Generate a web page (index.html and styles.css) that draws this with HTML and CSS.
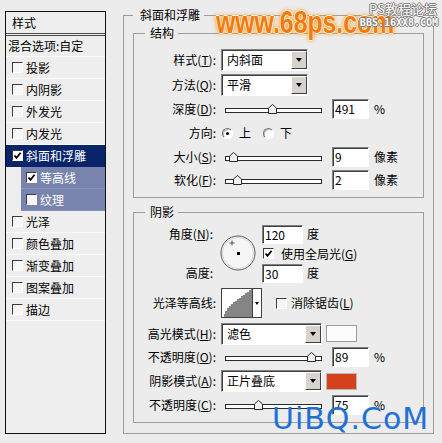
FILE: index.html
```html
<!DOCTYPE html>
<html lang="zh-CN">
<head>
<meta charset="UTF-8">
<title>图层样式 - 斜面和浮雕</title>
<link rel="stylesheet" href="styles.css">
</head>
<body>
  <div class="dialog">
    <div class="style-list">
      <div class="list-head">样式</div>
      <div class="list-row blend">混合选项:自定</div>
      <div class="list-row"><span class="cb"></span>投影</div>
      <div class="list-row"><span class="cb"></span>内阴影</div>
      <div class="list-row"><span class="cb"></span>外发光</div>
      <div class="list-row"><span class="cb"></span>内发光</div>
      <div class="list-row selected"><span class="cb on"><svg viewBox="0 0 9 9"><path d="M1.5 4.5 L3.5 6.8 L7.6 1.8"/></svg></span>斜面和浮雕</div>
      <div class="sub-rows">
        <div class="list-row sub"><span class="cb on"><svg viewBox="0 0 9 9"><path d="M1.5 4.5 L3.5 6.8 L7.6 1.8"/></svg></span>等高线</div>
        <div class="list-row sub"><span class="cb"></span>纹理</div>
      </div>
      <div class="list-row"><span class="cb"></span>光泽</div>
      <div class="list-row"><span class="cb"></span>颜色叠加</div>
      <div class="list-row"><span class="cb"></span>渐变叠加</div>
      <div class="list-row"><span class="cb"></span>图案叠加</div>
      <div class="list-row"><span class="cb"></span>描边</div>
    </div>

    <div class="settings">
      <fieldset class="group outer">
        <legend>斜面和浮雕</legend>

        <fieldset class="group structure">
          <legend>结构</legend>
          <div class="row tall">
            <span class="lbl">样式(<u>T</u>):</span>
            <div class="select"><span>内斜面</span><span class="arrow"><i></i></span></div>
          </div>
          <div class="row tall">
            <span class="lbl">方法(<u>Q</u>):</span>
            <div class="select"><span>平滑</span><span class="arrow"><i></i></span></div>
          </div>
          <div class="row">
            <span class="lbl">深度(<u>D</u>):</span>
            <div class="slider"><div class="track"></div><svg class="thumb" style="left:47px" viewBox="0 0 9 10"><path d="M0.5 9.5 V4 L4.5 0.5 L8.5 4 V9.5 Z"/></svg></div>
            <div class="num">491</div><span class="unit">%</span>
          </div>
          <div class="row">
            <span class="lbl">方向:</span>
            <span class="radio on"></span><span class="radio-text">上</span>
            <span class="radio"></span><span class="radio-text">下</span>
          </div>
          <div class="row">
            <span class="lbl">大小(<u>S</u>):</span>
            <div class="slider"><div class="track"></div><svg class="thumb" style="left:8px" viewBox="0 0 9 10"><path d="M0.5 9.5 V4 L4.5 0.5 L8.5 4 V9.5 Z"/></svg></div>
            <div class="num">9</div><span class="unit">像素</span>
          </div>
          <div class="row short">
            <span class="lbl">软化(<u>F</u>):</span>
            <div class="slider"><div class="track"></div><svg class="thumb" style="left:12px" viewBox="0 0 9 10"><path d="M0.5 9.5 V4 L4.5 0.5 L8.5 4 V9.5 Z"/></svg></div>
            <div class="num">2</div><span class="unit">像素</span>
          </div>
        </fieldset>

        <fieldset class="group shading">
          <legend>阴影</legend>
          <div class="angle-grid">
            <span class="lbl">角度(<u>N</u>):</span>
            <svg class="dial" viewBox="0 0 36 36">
              <circle cx="18" cy="18" r="17" fill="#f6f6f6" stroke="#5a5a5a"/>
              <circle cx="18" cy="18" r="15.5" fill="none" stroke="#d8d8d8"/>
              <path d="M12 5.5 V10.5 M9.5 8 H14.5" stroke="#555" stroke-width="1"/>
              <rect x="17" y="17" width="3" height="3" fill="#000"/>
            </svg>
            <span class="field"><span class="num short-num">120</span><span class="unit">度</span></span>
            <span class="field global"><span class="cb on"><svg viewBox="0 0 9 9"><path d="M1.5 4.5 L3.5 6.8 L7.6 1.8"/></svg></span><span class="cb-text">使用全局光(<u>G</u>)</span></span>
            <span class="lbl alt-lbl">高度:</span>
            <span class="field alt-field"><span class="num short-num">30</span><span class="unit">度</span></span>
          </div>
          <div class="row contour-row">
            <span class="lbl">光泽等高线:</span>
            <div class="contour">
              <svg class="contour-graph" viewBox="0 0 30 28"><path d="M2 28 V25 H3 V22 H5 V19 H7 V17 H9 V15 H11 V13 H13 V12 H15 V10 H17 V9 H19 V7 H21 V6 H23 V4 H25 V3 H27 V1 H29 V0 H30 V28 Z" fill="#858585"/></svg>
              <span class="contour-arrow"><i></i></span>
            </div>
            <span class="cb aa"></span><span class="cb-text">消除锯齿(<u>L</u>)</span>
          </div>
          <div class="row mode-row">
            <span class="lbl">高光模式(<u>H</u>):</span>
            <div class="select wide"><span>滤色</span><span class="arrow"><i></i></span></div>
            <span class="swatch white"></span>
          </div>
          <div class="row">
            <span class="lbl">不透明度(<u>O</u>):</span>
            <div class="slider"><div class="track"></div><svg class="thumb" style="left:86px" viewBox="0 0 9 10"><path d="M0.5 9.5 V4 L4.5 0.5 L8.5 4 V9.5 Z"/></svg></div>
            <div class="num">89</div><span class="unit">%</span>
          </div>
          <div class="row">
            <span class="lbl">阴影模式(<u>A</u>):</span>
            <div class="select wide"><span>正片叠底</span><span class="arrow"><i></i></span></div>
            <span class="swatch red"></span>
          </div>
          <div class="row">
            <span class="lbl">不透明度(<u>C</u>):</span>
            <div class="slider"><div class="track"></div><svg class="thumb" style="left:33px" viewBox="0 0 9 10"><path d="M0.5 9.5 V4 L4.5 0.5 L8.5 4 V9.5 Z"/></svg></div>
            <div class="num">75</div><span class="unit">%</span>
          </div>
        </fieldset>
      </fieldset>
    </div>

    <div class="mark-68">www.68ps.com</div>
    <div class="mark-bbs"><span class="bbs-top">PS教程论坛</span><span class="bbs-bottom">BBS.16XX8.COM</span></div>
    <div class="mark-uibq">UiBQ.CoM</div>
  </div>
</body>
</html>
```

FILE: styles.css
```css
* {
  box-sizing: border-box;
}

body {
  margin: 0;
  background: #ececec;
  font-family: "Noto Sans CJK SC", "Noto Sans", sans-serif;
  font-size: 12px;
  line-height: 16px;
  color: #000;
}

u {
  text-decoration: underline;
  text-underline-offset: 1px;
}

.dialog {
  position: relative;
  width: 442px;
  height: 443px;
  overflow: hidden;
  display: flex;
  align-items: flex-start;
  padding-left: 5px;
}

/* left list of styles */
.style-list {
  margin-top: 11px;
  width: 101px;
  height: 423px;
  border: 1px solid #111;
  background: #eeeeee;
  flex: none;
}

.list-head {
  height: 24px;
  line-height: 21px;
  padding-left: 6px;
  border-bottom: 3px double #4a4a4a;
}

.list-row {
  height: 22px;
  display: flex;
  align-items: center;
  padding-left: 6px;
  border-bottom: 1px solid #fafafa;
}

.list-row.blend {
  height: 21px;
  padding-left: 2px;
}

.list-row.selected {
  background: #0a246a;
  color: #fff;
  border-bottom-color: #0a246a;
}

.sub-rows {
  margin-left: 15px;
  background: #7884ad;
}

.list-row.sub {
  color: #fff;
  padding-left: 5px;
  border-bottom-color: #8a95ba;
}

.cb {
  width: 11px;
  height: 11px;
  flex: none;
  margin-right: 3px;
  border: 1px solid;
  border-color: #3c3c3c #ffffff #ffffff #3c3c3c;
  background: #f6f6f6;
  display: flex;
}

.cb.on {
  background: #fff;
}

.cb svg {
  width: 9px;
  height: 9px;
  fill: none;
  stroke: #000;
  stroke-width: 1.8;
}

/* right side */
.settings {
  margin-left: 17px;
  margin-top: 7px;
}

.group {
  margin: 0;
  padding: 0;
  border: 1px solid #9d9d9d;
  min-width: 0;
}

.group legend {
  line-height: 16px;
  padding: 0 4px 0 5px;
  margin-left: 11px;
}

.outer {
  width: 311px;
  height: 427px;
  padding: 2px 9px 0 9px;
}

.outer > legend {
  margin-left: 0;
  padding: 0 4px 0 7px;
}

.structure {
  padding: 6px 0 6px 0;
}

.shading {
  margin-top: 6px;
  padding: 3px 0 5px 0;
}

.row {
  display: flex;
  align-items: center;
  height: 24px;
}

.row.tall {
  height: 25px;
}

.row.short {
  height: 22px;
}

.lbl {
  width: 82px;
  flex: none;
  text-align: right;
  margin-right: 5px;
  white-space: nowrap;
}

.select {
  width: 87px;
  height: 22px;
  flex: none;
  display: flex;
  align-items: center;
  padding-left: 5px;
  background: #fff;
  border: 1px solid;
  border-color: #808080 #ffffff #ffffff #808080;
  box-shadow: inset 1px 1px 0 #404040;
}

.select.wide {
  width: 101px;
}

.select .arrow {
  margin-left: auto;
  width: 16px;
  height: 18px;
  background: #d6d3ce;
  border: 1px solid;
  border-color: #ffffff #404040 #404040 #ffffff;
  display: flex;
  align-items: center;
  justify-content: center;
}

.arrow i,
.contour-arrow i {
  width: 0;
  height: 0;
  border-left: 3.5px solid transparent;
  border-right: 3.5px solid transparent;
  border-top: 4px solid #000;
}

.slider {
  position: relative;
  width: 104px;
  height: 14px;
  flex: none;
}

.slider .track {
  position: absolute;
  left: 4px;
  right: 3px;
  top: 6px;
  height: 5px;
  background: #fff;
  border: 1px solid #2a2a2a;
}

.slider .thumb {
  position: absolute;
  top: 2px;
  width: 9px;
  height: 10px;
  fill: #f0f0f0;
  stroke: #2a2a2a;
  stroke-width: 1;
}

.num {
  width: 37px;
  height: 20px;
  margin-left: 7px;
  flex: none;
  padding-left: 2px;
  line-height: 18px;
  background: #fff;
  border: 1px solid;
  border-color: #808080 #ffffff #ffffff #808080;
  box-shadow: inset 1px 1px 0 #404040;
}

.unit {
  margin-left: 5px;
}

.radio {
  width: 11px;
  height: 11px;
  margin-left: 1px;
  border-radius: 50%;
  background: #fff;
  border: 1px solid;
  border-color: #707070 #ffffff #ffffff #707070;
  box-shadow: inset 1px 1px 0 #c0c0c0;
  display: flex;
  align-items: center;
  justify-content: center;
}

.radio.on::after {
  content: "";
  width: 3px;
  height: 3px;
  background: #000;
  border-radius: 50%;
}

.radio-text {
  margin-left: 6px;
}

.radio-text + .radio {
  margin-left: 12px;
}

/* angle / altitude block */
.angle-grid {
  display: grid;
  grid-template-columns: 82px 46px auto;
  grid-template-rows: 22px 17px 22px;
  align-items: center;
}

.angle-grid .lbl {
  grid-column: 1;
  margin-right: 3px;
  width: auto;
}

.dial {
  grid-column: 2;
  grid-row: 1 / 4;
  align-self: start;
  margin-top: 12px;
  margin-left: 4px;
  width: 36px;
  height: 36px;
}

.field {
  grid-column: 3;
  display: flex;
  align-items: center;
}

.field.global {
  grid-row: 2;
  padding-left: 1px;
}

.alt-lbl {
  grid-row: 3;
}

.alt-field {
  grid-row: 3;
}

.num.short-num {
  width: 41px;
  height: 19px;
  margin-left: 0;
  line-height: 17px;
}

.field .unit {
  margin-left: 4px;
}

.cb-text {
  margin-left: 4px;
}

.contour-row {
  height: 30px;
  margin-top: 4px;
}

.contour {
  width: 41px;
  height: 30px;
  flex: none;
  display: flex;
  background: #fff;
  border: 1px solid #404040;
}

.contour-graph {
  width: 30px;
  height: 28px;
}

.contour-arrow {
  flex: 1;
  border-left: 1px solid #404040;
  display: flex;
  align-items: center;
  justify-content: center;
}

.contour-arrow i {
  border-left-width: 2.5px;
  border-right-width: 2.5px;
  border-top-width: 3px;
}

.cb.aa {
  margin-left: 14px;
  margin-right: 0;
}

.mode-row {
  height: 23px;
  margin-top: 4px;
}

.swatch {
  width: 31px;
  height: 17px;
  margin-left: 4px;
  flex: none;
  border: 1px solid #9a9a9a;
}

.swatch.white {
  background: #fcfcfc;
}

.swatch.red {
  background: #d5411b;
  border-color: #b8b8b8;
}

/* watermarks over the dialog */
.mark-68 {
  position: absolute;
  left: 216px;
  top: 8px;
  font-family: "Liberation Sans", Arial, sans-serif;
  font-weight: bold;
  font-size: 31px;
  line-height: 30px;
  color: #f27a12;
  transform: scaleX(0.8);
  transform-origin: left top;
  text-shadow: 1px 0 0 #fff4d8, -1px 0 0 #fff4d8, 0 1px 0 #fff4d8, 0 -1px 0 #fff4d8, 0 0 4px #f5961e, 0 0 6px #f5961e;
}

.mark-bbs {
  position: absolute;
  left: 356px;
  top: 0;
  width: 86px;
  display: flex;
  flex-direction: column;
  align-items: center;
  color: #fff;
  text-shadow: 1px 0 0 #7a7a7a, -1px 0 0 #7a7a7a, 0 1px 0 #7a7a7a, 0 -1px 0 #7a7a7a;
}

.bbs-top {
  font-size: 13px;
  line-height: 17px;
  margin-left: 8px;
}

.bbs-bottom {
  font-family: "DejaVu Sans Mono", monospace;
  font-size: 10px;
  line-height: 12px;
  font-weight: bold;
}

.mark-uibq {
  position: absolute;
  left: 272px;
  top: 404px;
  font-family: "DejaVu Sans", sans-serif;
  font-size: 30px;
  line-height: 30px;
  letter-spacing: 1px;
  color: #2170d8;
}
```
